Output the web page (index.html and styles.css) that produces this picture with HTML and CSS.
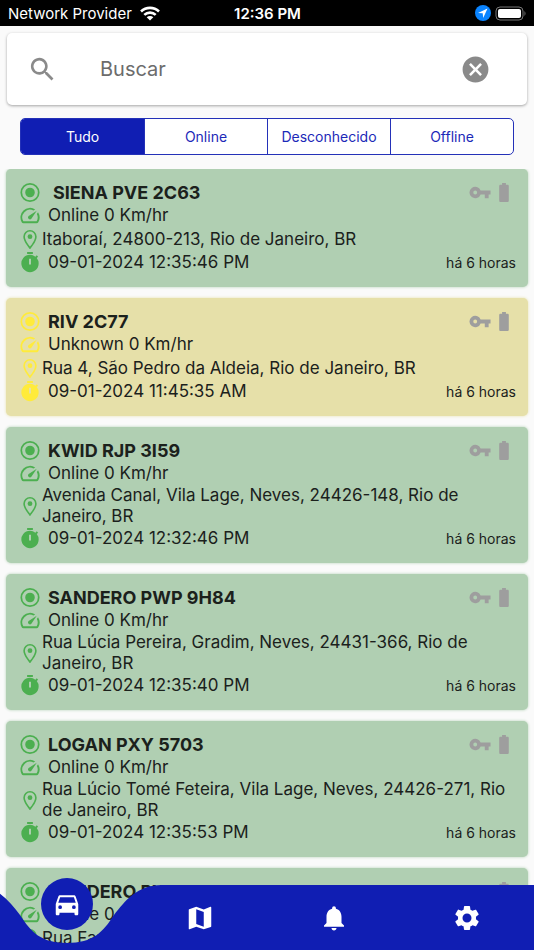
FILE: index.html
```html
<!DOCTYPE html>
<html lang="pt-BR">
<head>
<meta charset="utf-8">
<meta name="viewport" content="width=device-width, initial-scale=1">
<title>Veículos</title>
<link rel="stylesheet" href="styles.css">
</head>
<body>
<svg class="sprite" aria-hidden="true">
  <symbol id="i-radio" viewBox="0 0 24 24"><path d="M12 7a5 5 0 1 0 0 10 5 5 0 0 0 0-10zm0-5a10 10 0 1 0 0 20 10 10 0 0 0 0-20zm0 18.200a8.200 8.200 0 1 1 0-16.400 8.200 8.200 0 0 1 0 16.400z"/></symbol>
  <symbol id="i-speed" viewBox="0 0 24 24"><path d="M20.380 8.570l-1.230 1.850a8 8 0 0 1-.22 7.580H5.070A8 8 0 0 1 15.580 6.850l1.850-1.230A10 10 0 0 0 3.350 19a2 2 0 0 0 1.720 1h13.850a2 2 0 0 0 1.740-1 10 10 0 0 0-.27-10.440zM10.590 15.410a2 2 0 0 0 2.830 0l5.660-8.490-8.490 5.660a2 2 0 0 0 0 2.830z"/></symbol>
  <symbol id="i-pin" viewBox="0 0 24 24"><path d="M12 2a7 7 0 0 0-7 7c0 5.200 7 13 7 13s7-7.800 7-13a7 7 0 0 0-7-7zM6.700 9a5.300 5.300 0 0 1 10.600 0c0 2.900-2.900 7.500-5.300 10.400C9.600 16.400 6.700 11.900 6.700 9z"/><circle cx="12" cy="9" r="2.500"/></symbol>
  <symbol id="i-timer" viewBox="0 0 24 24"><path d="M15 1H9v2h6V1zm4.030 6.390 1.420-1.420c-.43-.51-.9-.99-1.410-1.410l-1.420 1.420A8.960 8.960 0 0 0 12 4a9 9 0 1 0 7.030 3.390zM13 14h-2V8h2v6z"/></symbol>
  <symbol id="i-key" viewBox="0 0 24 24"><path d="M12.650 10A6 6 0 1 0 12.650 14H17v4h4v-4h2v-4H12.650zM7 14a2 2 0 1 1 0-4 2 2 0 0 1 0 4z"/></symbol>
  <symbol id="i-battery" viewBox="0 0 24 24"><path d="M15.670 4H14V2h-4v2H8.330C7.600 4 7 4.600 7 5.330v15.330C7 21.400 7.600 22 8.330 22h7.330c.74 0 1.340-.6 1.340-1.330V5.330C17 4.600 16.400 4 15.670 4z"/></symbol>
</svg>

<header class="status">
  <div class="carrier">Network Provider
    <svg class="wifi" viewBox="0 0 20 15" aria-hidden="true"><g fill="none" stroke="currentColor" stroke-width="2.600"><path d="M1 5.500a13 13 0 0 1 18 0"/><path d="M4.300 8.900a8.200 8.200 0 0 1 11.400 0"/></g><path d="M10 14.600 6.700 11.300a4.700 4.700 0 0 1 6.600 0z" fill="currentColor"/></svg>
  </div>
  <time class="clock">12:36 PM</time>
  <div class="indicators">
    <svg class="location" viewBox="0 0 16 16" aria-hidden="true"><circle cx="8" cy="8" r="8" fill="#0a84ff"/><path d="M12.500 3.500 3 7.900l4.700.4.500 4.700z" fill="#fff"/></svg>
    <svg class="power" viewBox="0 0 32 15" aria-hidden="true"><rect x="1" y="1" width="27" height="13" rx="4" fill="none" stroke="#777"/><rect x="3" y="3" width="23" height="9" rx="2" fill="#fff"/><path d="M29.500 5v5q2-2.500 0-5z" fill="#777"/></svg>
  </div>
</header>

<main class="page">
  <form class="search" role="search">
    <svg class="search-icon" viewBox="0 0 24 24" aria-hidden="true"><path d="M15.500 14h-.79l-.28-.27A6.500 6.500 0 1 0 13.730 14.430l.27.28v.79l5 4.990L20.490 19l-4.990-5zm-6 0a4.500 4.500 0 1 1 0-9 4.500 4.500 0 0 1 0 9z"/></svg>
    <input class="search-input" type="text" placeholder="Buscar" aria-label="Buscar">
    <button class="clear" type="button" aria-label="Limpar"><svg viewBox="0 0 24 24"><path d="M12 2a10 10 0 1 0 0 20 10 10 0 0 0 0-20zm5 13.590L15.590 17 12 13.410 8.410 17 7 15.590 10.590 12 7 8.410 8.410 7 12 10.590 15.590 7 17 8.410 13.410 12 17 15.590z"/></svg></button>
  </form>

  <div class="filters">
    <button class="filter selected" type="button" aria-pressed="true">Tudo</button>
    <button class="filter" type="button" aria-pressed="false">Online</button>
    <button class="filter" type="button" aria-pressed="false">Desconhecido</button>
    <button class="filter" type="button" aria-pressed="false">Offline</button>
  </div>

  <section class="list">
    <article class="card">
      <div class="row"><svg class="icon"><use href="#i-radio"/></svg><h2 class="name indent">SIENA PVE 2C63</h2><svg class="flag"><use href="#i-key"/></svg><svg class="flag"><use href="#i-battery"/></svg></div>
      <div class="row"><svg class="icon"><use href="#i-speed"/></svg><span class="text">Online 0 Km/hr</span></div>
      <div class="row place"><svg class="icon"><use href="#i-pin"/></svg><span class="address">Itaboraí, 24800-213, Rio de Janeiro, BR</span></div>
      <div class="row"><svg class="icon"><use href="#i-timer"/></svg><span class="text">09-01-2024 12:35:46 PM</span><span class="ago">há 6 horas</span></div>
    </article>
    <article class="card unknown">
      <div class="row"><svg class="icon"><use href="#i-radio"/></svg><h2 class="name">RIV 2C77</h2><svg class="flag"><use href="#i-key"/></svg><svg class="flag"><use href="#i-battery"/></svg></div>
      <div class="row"><svg class="icon"><use href="#i-speed"/></svg><span class="text">Unknown 0 Km/hr</span></div>
      <div class="row place"><svg class="icon"><use href="#i-pin"/></svg><span class="address">Rua 4, São Pedro da Aldeia, Rio de Janeiro, BR</span></div>
      <div class="row"><svg class="icon"><use href="#i-timer"/></svg><span class="text">09-01-2024 11:45:35 AM</span><span class="ago">há 6 horas</span></div>
    </article>
    <article class="card">
      <div class="row"><svg class="icon"><use href="#i-radio"/></svg><h2 class="name">KWID RJP 3I59</h2><svg class="flag"><use href="#i-key"/></svg><svg class="flag"><use href="#i-battery"/></svg></div>
      <div class="row"><svg class="icon"><use href="#i-speed"/></svg><span class="text">Online 0 Km/hr</span></div>
      <div class="row place"><svg class="icon"><use href="#i-pin"/></svg><span class="address">Avenida Canal, Vila Lage, Neves, 24426-148, Rio de Janeiro, BR</span></div>
      <div class="row"><svg class="icon"><use href="#i-timer"/></svg><span class="text">09-01-2024 12:32:46 PM</span><span class="ago">há 6 horas</span></div>
    </article>
    <article class="card">
      <div class="row"><svg class="icon"><use href="#i-radio"/></svg><h2 class="name">SANDERO PWP 9H84</h2><svg class="flag"><use href="#i-key"/></svg><svg class="flag"><use href="#i-battery"/></svg></div>
      <div class="row"><svg class="icon"><use href="#i-speed"/></svg><span class="text">Online 0 Km/hr</span></div>
      <div class="row place"><svg class="icon"><use href="#i-pin"/></svg><span class="address">Rua Lúcia Pereira, Gradim, Neves, 24431-366, Rio de Janeiro, BR</span></div>
      <div class="row"><svg class="icon"><use href="#i-timer"/></svg><span class="text">09-01-2024 12:35:40 PM</span><span class="ago">há 6 horas</span></div>
    </article>
    <article class="card">
      <div class="row"><svg class="icon"><use href="#i-radio"/></svg><h2 class="name">LOGAN PXY 5703</h2><svg class="flag"><use href="#i-key"/></svg><svg class="flag"><use href="#i-battery"/></svg></div>
      <div class="row"><svg class="icon"><use href="#i-speed"/></svg><span class="text">Online 0 Km/hr</span></div>
      <div class="row place"><svg class="icon"><use href="#i-pin"/></svg><span class="address">Rua Lúcio Tomé Feteira, Vila Lage, Neves, 24426-271, Rio de Janeiro, BR</span></div>
      <div class="row"><svg class="icon"><use href="#i-timer"/></svg><span class="text">09-01-2024 12:35:53 PM</span><span class="ago">há 6 horas</span></div>
    </article>
    <article class="card">
      <div class="row"><svg class="icon"><use href="#i-radio"/></svg><h2 class="name">SANDERO PWX 7A33</h2><svg class="flag"><use href="#i-key"/></svg><svg class="flag"><use href="#i-battery"/></svg></div>
      <div class="row"><svg class="icon"><use href="#i-speed"/></svg><span class="text">Online 0 Km/hr</span></div>
      <div class="row place"><svg class="icon"><use href="#i-pin"/></svg><span class="address">Rua Far</span></div>
    </article>
  </section>
</main>

<nav class="tabs" aria-label="Principal">
  <svg class="wave" width="4000" height="72" viewBox="0 0 4000 72" aria-hidden="true"><path d="M0 7H5C30 7 42 23 53 37C64 54 74 65 100 65C126 65 136 54 147 37C158 23 170 7 195 7H4000V72H0z"/></svg>
  <a class="tab current" href="#veiculos" aria-label="Veículos" aria-current="page"><svg viewBox="0 0 24 24"><path d="M18.920 6.010C18.720 5.420 18.160 5 17.500 5h-11c-.66 0-1.210.42-1.420 1.010L3 12v8c0 .55.45 1 1 1h1c.55 0 1-.45 1-1v-1h12v1c0 .55.45 1 1 1h1c.55 0 1-.45 1-1v-8l-2.080-5.990zM6.500 16a1.500 1.500 0 1 1 0-3 1.500 1.500 0 0 1 0 3zm11 0a1.500 1.500 0 1 1 0-3 1.500 1.500 0 0 1 0 3zM5 11l1.500-4.500h11L19 11H5z"/></svg></a>
  <a class="tab" href="#mapa" aria-label="Mapa"><svg viewBox="0 0 24 24"><path d="m20.500 3-.16.030L15 5.100 9 3 3.360 4.900c-.21.070-.36.250-.36.480V20.500c0 .28.220.5.500.5l.16-.030L9 18.900l6 2.100 5.640-1.900c.21-.070.36-.250.36-.480V3.500c0-.28-.22-.5-.5-.5zM15 19l-6-2.110V5l6 2.110V19z"/></svg></a>
  <a class="tab" href="#alertas" aria-label="Alertas"><svg viewBox="0 0 24 24"><path d="M12 22c1.100 0 2-.9 2-2h-4c0 1.100.89 2 2 2zm6-6v-5c0-3.070-1.640-5.640-4.500-6.320V4a1.500 1.500 0 0 0-3 0v.68C7.630 5.360 6 7.920 6 11v5l-2 2v1h16v-1l-2-2z"/></svg></a>
  <a class="tab" href="#ajustes" aria-label="Ajustes"><svg viewBox="0 0 24 24"><path d="M19.140 12.940c.04-.3.060-.61.060-.94 0-.32-.02-.64-.07-.94l2.030-1.580c.18-.14.230-.41.120-.61l-1.920-3.320c-.12-.22-.37-.29-.59-.22l-2.390.96c-.5-.38-1.030-.7-1.620-.94l-.36-2.540c-.04-.24-.24-.41-.48-.41h-3.840c-.24 0-.43.17-.47.41l-.36 2.540c-.59.24-1.130.57-1.620.94l-2.390-.96c-.22-.08-.47 0-.59.22L2.740 8.870c-.12.210-.08.470.12.610l2.030 1.580c-.05.300-.09.630-.09.940s.02.640.07.940l-2.030 1.580c-.18.140-.23.410-.12.610l1.920 3.320c.12.220.37.290.59.220l2.390-.96c.5.380 1.030.7 1.620.94l.36 2.540c.05.240.240.410.480.410h3.840c.24 0 .44-.17.470-.41l.36-2.540c.59-.24 1.130-.56 1.620-.94l2.390.96c.22.080.47 0 .59-.22l1.920-3.320c.12-.22.070-.47-.12-.61l-2.010-1.580zM12 15.600A3.600 3.600 0 1 1 12 8.400a3.600 3.600 0 0 1 0 7.200z"/></svg></a>
</nav>
</body>
</html>
```
FILE: styles.css
```css
* { box-sizing: border-box; }

body {
  margin: 0;
  height: 100vh;
  overflow: hidden;
  display: flex;
  flex-direction: column;
  background: #fafafa;
  color: #1b211c;
  font-family: Inter, "Liberation Sans", sans-serif;
  font-size: 17px;
}

svg { display: block; fill: currentColor; }
.sprite { position: absolute; width: 0; height: 0; }

.status {
  flex: none;
  display: grid;
  grid-template-columns: 1fr auto 1fr;
  align-items: center;
  height: 26px;
  padding: 0 7px 0 8px;
  background: #000;
  color: #fff;
  font-size: 15px;
}
.carrier { display: flex; align-items: center; gap: 8px; white-space: nowrap; }
.wifi { width: 20px; height: 15px; }
.clock { font-weight: 600; }
.indicators { display: flex; justify-content: flex-end; align-items: center; gap: 4px; }
.location { width: 16px; height: 16px; }
.power { width: 32px; height: 15px; }

.page {
  flex: 1;
  min-height: 0;
  display: flex;
  flex-direction: column;
  padding: 7px 6px 0;
}

.search {
  flex: none;
  display: flex;
  align-items: center;
  height: 72px;
  margin: 0 1px;
  padding: 0 36px 0 20px;
  border-radius: 5px;
  background: #fff;
  box-shadow: 0 1px 3px rgba(0, 0, 0, 0.35);
}
.search-icon { width: 31px; height: 31px; color: #8a8a8a; }
.search-input {
  flex: 1;
  min-width: 0;
  margin-left: 42px;
  padding: 0;
  border: 0;
  outline: 0;
  background: none;
  color: #333;
  font: 20px Inter, "Liberation Sans", sans-serif;
}
.search-input::placeholder { color: #6c6c6c; opacity: 1; }
.clear { padding: 0; border: 0; background: none; color: #8a8a8a; }
.clear svg { width: 31px; height: 31px; }

.filters {
  flex: none;
  display: grid;
  grid-template-columns: repeat(4, 1fr);
  height: 37px;
  margin: 13px 14px 14px;
  overflow: hidden;
  border: 1px solid #2431b8;
  border-radius: 5px;
  background: #fff;
}
.filter {
  padding: 0;
  border: 0;
  border-left: 1px solid #2431b8;
  background: none;
  color: #1c29b8;
  font: 14px Inter, "Liberation Sans", sans-serif;
}
.filter:first-child { border-left: 0; }
.filter.selected { background: #101eb3; color: #fff; }

.list {
  flex: 1;
  min-height: 0;
  display: flex;
  flex-direction: column;
  gap: 11px;
  margin: 0 -6px;
  padding: 0 6px;
  overflow: hidden;
}

.card {
  flex: none;
  padding: 12px 12px 13px;
  border-radius: 5px;
  background: #b0cfb2;
  box-shadow: 0 0 3px #b0cfb2;
  color: #1b211c;
}
.card.unknown { background: #e6e0a9; box-shadow: 0 0 3px #e6e0a9; }

.row { display: flex; align-items: center; min-height: 23px; }
.place { min-height: 24px; }
.icon { flex: none; width: 24px; height: 23px; color: #4caf50; }
.unknown .icon { color: #ffeb3b; }
.name { flex: 1; margin: 0 0 0 6px; font-size: 18px; font-weight: 700; line-height: 23px; }
.name.indent { margin-left: 11px; }
.flag { width: 24px; height: 23px; color: #9e9e9e; }
.text { flex: 1; margin-left: 6px; line-height: 23px; }
.address { flex: 1; line-height: 21px; }
.ago { font-size: 14px; }

.tabs {
  position: fixed;
  right: 0;
  bottom: 0;
  left: 0;
  display: grid;
  grid-template-columns: repeat(4, 1fr);
  height: 72px;
  overflow: hidden;
}
.wave { position: absolute; top: 0; left: calc(12.5% - 100px); color: #101eb3; }
.tab {
  position: relative;
  display: flex;
  justify-content: center;
  align-items: center;
  padding-top: 7px;
  color: #fff;
}
.tab svg { width: 30px; height: 30px; }
.tab.current {
  justify-self: center;
  width: 52px;
  height: 52px;
  padding: 0;
  border-radius: 50%;
  background: #101eb3;
}
```
